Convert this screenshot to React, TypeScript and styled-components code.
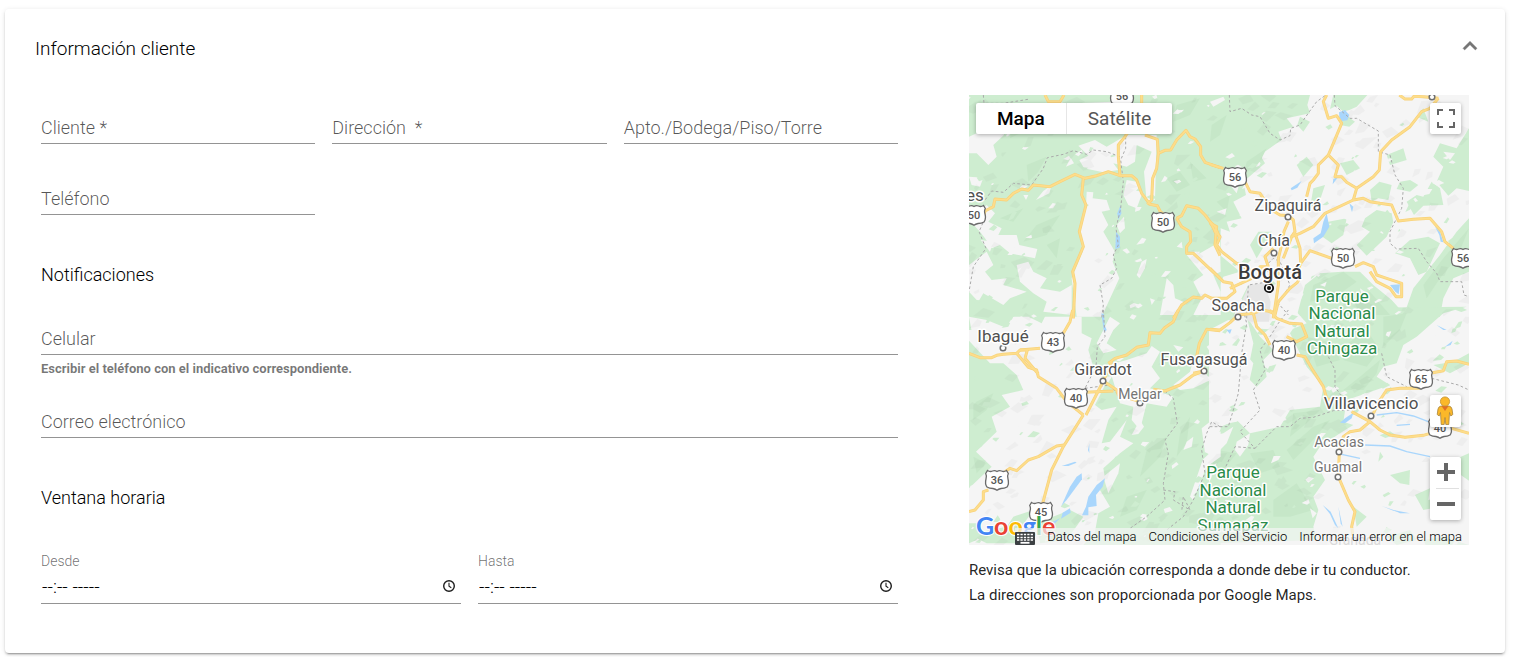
import React, { useId, useState } from 'react';
import styled, { createGlobalStyle } from 'styled-components';

const GlobalStyle = createGlobalStyle`
  *, *::before, *::after { box-sizing: border-box; }
  body {
    margin: 0;
    background: #fff;
    color: rgba(0, 0, 0, 0.87);
    font-family: Roboto, "Liberation Sans", sans-serif;
    font-size: 18px;
    font-weight: 300;
  }
  button, input { font: inherit; color: inherit; }
  button { margin: 0; padding: 0; border: 0; background: none; cursor: pointer; }
`;

const Card = styled.section`
  margin: 9px 15px 4px 5px;
  padding-bottom: 45px;
  border-radius: 4px;
  background: #fff;
  box-shadow: 0 3px 1px -2px rgba(0, 0, 0, 0.2), 0 2px 2px 0 rgba(0, 0, 0, 0.14),
    0 1px 5px 0 rgba(0, 0, 0, 0.12);
`;

const Header = styled.header`
  display: flex;
  align-items: center;
  justify-content: space-between;
  height: 86px;
  padding: 0 21px 6px 30px;
`;

const Title = styled.h2`
  margin: 0;
  color: #000;
  font-size: 19px;
  line-height: 24px;
  font-weight: 300;
`;

const ToggleButton = styled.button`
  display: flex;
  margin-bottom: 6px;
  color: #757575;
`;

const Body = styled.div`
  display: flex;
  align-items: flex-start;
  gap: 71px;
  padding: 0 36px;
`;

const Form = styled.form`
  display: flex;
  flex: 1;
  flex-direction: column;
  min-width: 0;
  padding-top: 17px;
`;

const Row = styled.div<{ $columns: number; $space?: number }>`
  display: grid;
  grid-template-columns: repeat(${(p) => p.$columns}, minmax(0, 1fr));
  gap: 17px;
  margin-bottom: ${(p) => p.$space ?? 0}px;
`;

const SectionTitle = styled.h3<{ $space: number }>`
  margin: 0 0 ${(p) => p.$space}px;
  color: #000;
  font-size: 18px;
  line-height: 24px;
  font-weight: 300;
`;

const FieldBox = styled.div`
  display: grid;
`;

const FieldLabel = styled.label`
  grid-area: 1 / 1;
  align-self: center;
  color: rgba(0, 0, 0, 0.66);
  line-height: 24px;
  white-space: pre;
  pointer-events: none;
`;

const FieldInput = styled.input`
  grid-area: 1 / 1;
  width: 100%;
  height: 32px;
  padding: 0;
  border: 0;
  border-bottom: 1px solid #949494;
  border-radius: 0;
  background: transparent;
  outline: none;
`;

const Hint = styled.p`
  margin: 6px 0 0;
  color: rgba(0, 0, 0, 0.54);
  font-size: 13px;
  line-height: 16px;
  font-weight: 700;
`;

const TimeBox = styled.div`
  display: flex;
  flex-direction: column;
  gap: 2px;
`;

const TimeLabel = styled.label`
  color: rgba(0, 0, 0, 0.58);
  font-size: 14px;
  line-height: 16px;
`;

const TimeControl = styled.div`
  display: flex;
  align-items: center;
  height: 33px;
  padding: 0 5px 2px 1px;
  border-bottom: 1px solid #949494;
`;

const TimeInput = styled.input`
  flex: 1;
  min-width: 0;
  padding: 0;
  border: 0;
  background: transparent;
  color: #000;
  outline: none;
  font-size: 19px;
`;

const PickerButton = styled.button`
  display: flex;
`;

const MapColumn = styled.aside`
  flex: 0 0 500px;
`;

const MapFrame = styled.div`
  position: relative;
  height: 450px;
  overflow: hidden;
  background: #f5f5f5;
`;

const MapCanvas = styled.svg`
  display: block;
  width: 100%;
  height: 100%;
`;

const ControlPanel = styled.div`
  position: absolute;
  display: flex;
  border-radius: 2px;
  background: #fff;
  box-shadow: 0 1px 4px rgba(0, 0, 0, 0.3);
`;

const TypePanel = styled(ControlPanel)`
  top: 8px;
  left: 7px;
`;

const TypeButton = styled.button<{ $active?: boolean }>`
  height: 31px;
  padding: 0 21px;
  color: ${(p) => (p.$active ? '#000' : '#565656')};
  font-size: 19px;
  font-weight: ${(p) => (p.$active ? 500 : 400)};
  & + & { border-left: 1px solid #e6e6e6; }
`;

const FullscreenPanel = styled(ControlPanel)`
  top: 8px;
  right: 8px;
`;

const ZoomPanel = styled(ControlPanel)`
  right: 8px;
  bottom: 25px;
  flex-direction: column;
`;

const PegmanPanel = styled(ControlPanel)`
  right: 8px;
  bottom: 118px;
`;

const SquareButton = styled.button<{ $tall?: boolean }>`
  display: flex;
  align-items: center;
  justify-content: center;
  width: 31px;
  height: ${(p) => (p.$tall ? 32 : 31)}px;
`;

const Divider = styled.div`
  height: 1px;
  margin: 0 2px 0 6px;
  background: #e0e0e0;
`;

const Attribution = styled.div`
  position: absolute;
  right: 0;
  bottom: 0;
  display: flex;
  align-items: center;
  gap: 12px;
  height: 17px;
  padding-right: 7px;
  background: rgba(245, 245, 245, 0.7);
  font-size: 13px;
  font-weight: 300;
`;

const AttributionLink = styled.a`
  color: #000;
  text-decoration: none;
`;

const KeyboardButton = styled.button`
  display: flex;
  align-self: flex-end;
`;

const MapNote = styled.p`
  margin: 13px 0 0;
  font-size: 15px;
  line-height: 25px;
  font-weight: 400;
`;

const ROADS: Record<string, string[]> = {
  a: [
    '70,400 75,378 100,365 105,342 140,345 160,325 185,312 205,316 220,300 270,305 300,290 345,268 375,280 410,272 445,260 480,272 515,272 530,285 545,325 570,358 592,362 600,378 612,390',
    '370,280 365,330 378,360 358,440 370,485 338,560 345,595 340,700',
    '545,30 545,80 495,155 475,180 475,215 480,272',
    '555,150 592,163 595,205 590,250 578,280 575,345 562,358',
    '595,205 615,196 632,195 650,165 678,136 690,155 705,162 722,185 722,210 735,232 780,248',
    '650,400 665,392 680,362 715,370 735,390 750,410 765,425 780,460',
    '650,400 665,425 690,440 692,470 680,485 680,505 700,505 780,580',
    '750,410 768,445 765,480 780,512',
    '640,700 665,660 700,636 725,640 735,630 755,640',
    '255,30 265,50 300,50 312,30',
  ],
  b: [
    '0,238 40,250',
    '105,290 120,320 150,325 160,340 185,375 210,390 235,392 250,405 255,440 245,455',
    '350,30 340,50 355,100 380,92 395,115 370,175 355,210 325,240 325,265 310,285 300,295 290,335',
    '355,210 385,240 375,275 395,275 410,292 440,310',
    '685,40 660,70 635,80 600,125 545,165 512,200 508,255 490,275 440,310 430,345',
    '430,345 345,385 310,425 270,445 245,455 220,520',
    '430,345 460,340 480,350 510,355 545,360 565,408 610,403 660,400 695,440 705,470 730,490',
    '568,30 585,42 605,42 612,34 640,35 685,40',
    '235,410 222,440 215,480 205,520 205,600 190,700',
    '255,445 270,490 272,535 300,497 365,520',
    '435,545 460,533 490,545 500,570 530,580 575,595 575,635 558,635 540,610 500,590 480,560',
    '190,490 165,515 175,545 150,545 178,605',
    '0,415 20,425 15,440 30,455 20,480 35,500 80,535 130,560',
    '0,550 40,590 65,595 75,620 50,640 0,640',
    '60,610 125,580',
    '265,590 240,610 205,650 195,690',
    '272,535 262,560 265,590',
  ],
  c: [
    '27,130 60,143 95,143 110,136 130,133 170,130 180,120 240,115',
    '310,70 330,35 338,0',
    '170,130 205,172 230,180 235,200 290,235 320,275 370,315',
    '180,120 202,120 195,145 235,192',
    '375,247 460,243',
    '455,155 430,213 378,315',
    '430,213 470,240 475,255 540,275',
    '370,315 310,410 275,480 248,580',
    '312,405 290,408 235,440 205,450 170,482 150,475 135,485',
    '85,540 70,545 70,570 45,600 27,605',
    '445,160 465,145 500,135 530,112 565,105 570,68 600,70 612,55 640,35 655,0',
    '580,238 615,243 660,225 700,195 735,182 700,190',
    '710,140 718,100 740,58 780,62',
  ],
  d: [
    '0,58 30,60 60,38 85,15 130,10 140,50 165,75 180,105',
    '130,10 155,0 185,5 200,25 240,40 275,42 290,80 260,95 230,80',
    '180,10 185,0',
    '260,135 285,140 305,175 340,230 350,265 370,275',
    '425,305 480,335 510,360 540,375 585,382 640,376 660,370',
    '725,355 777,370',
    '480,335 450,360 420,365 400,380 388,425 385,500 415,570 435,605 425,650 430,690',
    '490,310 510,270 530,240 570,235 630,235',
    '660,190 700,182 710,155 740,153 777,163',
  ],
};

const BORDERS: Record<string, string[]> = {
  a: [
    '70,30 72,55 130,55 210,42',
    '480,215 440,200 400,195 380,208 340,197 310,208 262,218 250,250 215,300 160,295 130,322 95,318 75,345',
    '497,155 497,190 482,225 490,290 482,370 468,430 475,480 460,510 470,550 455,580 420,600 430,660 425,700',
    '75,400 57,440 78,490 40,545 27,620',
  ],
  b: [
    '58,30 60,80 95,70 125,90 150,95 180,145 210,165 240,152 242,130 270,120 298,80 320,50 345,32',
    '373,30 375,62 420,100 440,100 505,138 505,200 540,210 555,270 580,310 575,370 560,400 540,440 540,475 560,492 625,490 650,530 680,565 690,590 755,590 762,630 777,635',
    '110,700 115,600 180,590 170,540 190,520 210,530 240,600 205,655 235,690',
  ],
  c: [
    '430,0 435,80 412,110 408,170 375,235',
    '375,235 450,225 470,250',
    '615,243 640,265 652,340 615,390 625,430 610,520 615,570 560,620 510,655',
    '780,350 755,335 740,370 725,420 735,490 700,570 670,620 620,660',
    '610,540 645,545 640,570 690,600 670,560 665,605',
  ],
  d: [
    '100,0 110,40 95,130 85,250 55,350 0,350',
    '235,0 205,40 180,80 150,120 165,180 130,240 150,300 90,365 135,415 75,410 45,475',
    '135,415 200,350 240,350 270,325 310,322 370,302 425,300',
    '355,140 375,180 375,230 395,260',
    '515,130 530,200 590,230',
    '665,205 745,225 777,240',
  ],
};

const WATER: Record<string, string[]> = {
  a: ['482,360 484,385 475,405 472,385', '468,440 480,455 479,488 466,492'],
  b: [
    '387,82 405,75 418,90 412,106 395,108 388,98',
    '350,385 358,425 340,455 312,475 310,460 332,445 340,410',
    '242,310 275,288 262,308 245,316',
    '385,275 368,298 370,282',
    '418,355 430,365 426,382',
    '675,425 690,440 700,472 692,470 688,450',
    '540,600 570,598 566,628 556,620',
  ],
  c: [
    '424,10 432,12 434,45 440,60 432,68',
    '388,400 388,430 384,420',
    '305,468 345,455 350,458 325,468',
    '365,490 366,508 320,570 304,588 330,530 350,500',
    '435,505 428,530 408,555 410,588 385,592 385,616 366,616 378,590 385,560 410,525',
    '330,595 332,608 303,626 308,608',
    '270,640 300,625 285,640',
  ],
  d: [
    '680,45 710,60 700,60',
    '705,110 728,92 722,105',
    '390,338 405,325 430,308 425,325 405,340',
    '50,60 65,58 60,72',
    '338,585 362,605 385,655 375,645 360,612',
    '385,590 398,650 392,640',
    '515,588 575,608 550,602',
    '550,600 600,610 570,610',
  ],
};

const RIVERS: Record<string, string[]> = {
  a: [],
  b: [],
  c: [],
  d: [
    '500,315 560,308 610,318 655,335',
    '465,405 540,408 590,425 660,440',
    '395,433 450,445',
    '560,346 600,343',
  ],
};

const FOREST: Record<string, string[]> = {
  a: ['27,30 782,30 782,695 27,695'],
  b: [
    '-3,30 300,30 292,60 300,85 230,100 250,125 205,140 215,165 150,210 165,235 100,290 108,330 70,350 95,400 50,410 60,440 20,425 30,480 -3,480',
    '370,30 472,30 440,65 418,75 400,80 380,62 360,72',
    '400,85 435,110 418,125 390,120',
    '270,95 300,110 280,140 262,120',
    '690,175 740,190 777,130 777,318 740,310 715,332 680,290 700,245 670,215',
    '620,330 640,335 665,290 690,310 700,360 640,362 612,390 590,350',
    '570,290 600,285 625,300 600,320 560,312',
    '480,315 508,290 545,300 535,345 505,340 485,350',
    '465,400 500,375 545,385 550,412 530,455 470,512 440,480 480,440 455,425',
    '355,410 410,400 400,450 365,475 330,450',
    '530,210 580,190 590,225 540,240',
    '285,600 330,565 395,560 450,560 490,600 545,645 590,695 260,695',
    '580,695 610,610 690,510 740,440 777,400 777,560 730,580 700,640 690,695',
    '555,505 600,465 655,455 690,475 650,560 625,570 600,520',
    '120,480 145,440 185,440 170,470 140,520',
    '260,240 290,215 310,240 280,275',
    '-3,520 30,510 90,560 40,575 30,600 -3,560',
    '95,640 115,600 140,660 110,695',
    '390,235 430,225 450,250 410,270',
    '310,310 345,300 330,345 300,370',
    '620,95 640,70 655,110',
  ],
  c: [
    '27,0 200,0 160,20 145,50 90,60 27,60',
    '27,92 90,160 130,160 170,195 190,240 125,255 150,290 95,320 110,365 48,425 95,470 27,535',
    '365,0 782,0 782,705 370,705 405,665 415,610 450,590 420,540 435,505 430,475 480,430 520,400 480,380 500,330 450,395 425,400 445,330 470,290 425,300 405,285 440,215 400,170 385,120 395,85 365,70',
    '140,650 160,620 220,600 185,650 200,700 80,700 30,675 90,660',
    '27,640 60,640 50,690 27,700',
    '230,640 330,600 370,620 320,690 240,700',
    '205,20 260,10 245,40',
  ],
  d: [
    '-3,-10 80,-10 60,60 20,110 -3,90',
    '240,70 290,-5 770,-10 700,10 620,80 580,105 560,160 520,170 500,200 540,225 470,250 410,270 400,335 430,345 390,370 330,410 310,440 345,510 310,560 325,600 310,650 320,690 -3,700 -3,365 80,330 120,370 210,350 240,300 330,290 340,230 290,170',
    '110,20 150,80 190,120 160,150 170,200 140,230 110,200 130,100',
    '670,165 730,155 777,130 777,160 720,190',
    '540,495 600,480 598,525 570,520',
    '725,452 777,430 777,512 745,490',
    '510,425 520,440 505,455',
    '615,555 660,535 655,570 690,560 690,590 640,600',
    '430,590 470,620 440,650',
    '530,680 600,660 620,690 560,705',
    '640,690 700,680 777,705 650,712',
  ],
};

const CLEARINGS: Record<string, string[]> = {
  a: [
    '27,155 125,110 132,150 100,180 110,215 85,240 50,205 27,205',
    '27,275 70,278 60,305 35,300',
    '215,60 460,50 450,85 420,60 370,75 300,50',
    '355,182 405,165 440,185 500,150 590,150 585,345 560,350 552,260 575,200 530,180 525,230 500,245 460,235 475,255 430,262 372,250 358,225 385,212',
    '318,245 332,218 342,235',
    '228,345 250,318 275,300 268,325',
    '190,330 205,330 198,345',
    '505,360 490,330 500,285 530,290 545,330 530,370',
    '380,320 400,322 398,340 440,345 450,375 425,380 445,420 430,440 465,500 458,530 478,580 425,695 350,695 335,580 368,500 358,430 378,365',
    '27,405 80,360 105,385 85,410 125,430 115,450 170,450 178,480 232,492 225,520 150,505 120,480 95,490 75,460 60,440',
    '27,540 80,500 100,540 75,560 95,585 140,580 130,600 200,620 150,640 130,660 70,625 55,650 27,620',
    '170,540 205,530 220,560 260,580 240,610 300,620 335,600 335,690 250,680 260,650 220,625 180,590',
    '62,465 100,470 90,500',
    '530,570 545,530 560,522 555,550 538,580',
    '680,510 720,505 780,470 782,560 760,570 782,620 782,690 700,690 725,640 700,590 730,570',
    '620,580 640,600 645,640 670,650 650,690 600,690',
    '700,530 690,500 720,500',
    '470,420 492,395 495,430 480,445',
    '650,485 665,470 668,490',
    '570,640 585,645 575,660',
  ],
  b: [
    '0,50 40,35 45,45 10,65',
    '60,300 90,290 80,325',
    '20,380 50,370 45,390',
    '330,600 350,590 345,605',
    '700,200 735,205 720,225',
    '450,610 470,625 455,630',
  ],
  c: [
    '27,20 80,30 130,50 100,70 160,80 40,90',
    '445,165 500,150 560,130 575,108 600,125 575,170 600,205 570,235 640,260 620,290 560,280 540,360 515,330 520,290 480,280 465,230',
    '640,105 670,112 655,125',
    '640,225 690,185 700,150 745,200 782,165 782,200 740,215 700,235 660,240',
    '450,20 480,40 460,60 440,100 470,120 430,130 410,100',
    '515,375 540,330 552,350 535,372',
    '680,395 700,380 695,410 670,420',
    '725,355 782,310 782,440 740,470 700,570 690,560 735,430',
    '430,500 480,460 475,490 445,550',
    '740,110 782,80 782,110 760,140',
  ],
  d: [
    '-3,60 55,30 110,40 90,110 130,160 110,250 130,300 80,335 -3,350',
    '-3,380 40,370 70,350 50,400 10,440 -3,450',
    '80,395 120,370 115,405 90,440 75,420',
    '150,270 210,300 230,330 170,345',
    '-3,470 20,460 5,500 -3,520',
    '250,-5 290,40 240,60 210,30',
    '300,595 320,610 308,625',
  ],
};

const RELIEF: Record<string, string[]> = {
  a: [
    '160,95 215,110 190,140 150,160',
    '200,240 260,215 235,260 205,290',
    '230,420 300,390 260,450 190,470',
    '120,400 190,370 160,410',
    '650,60 720,40 690,90 640,110',
    '690,230 740,280 700,290',
    '620,280 660,260 690,300 650,320',
    '260,480 300,460 290,520',
  ],
  b: [
    '5,120 50,90 30,150 0,170',
    '110,230 170,190 150,230 100,270',
    '310,600 400,560 440,590 370,640 300,650',
    '420,620 480,620 540,690 450,690',
    '640,600 700,520 777,430 740,520 690,580 650,640',
    '20,350 60,330 50,380',
  ],
  c: [
    '40,280 100,250 80,300 40,330',
    '560,420 620,380 600,440 540,500',
    '660,370 690,320 680,400 650,440',
    '500,560 560,540 530,600 480,620',
    '40,440 80,460 50,490',
  ],
  d: [
    '400,110 470,60 510,120 470,170 400,150',
    '450,200 510,150 500,190 460,240 400,240',
    '520,20 590,10 570,60 520,110',
    '290,80 370,100 390,150 320,170',
    '230,420 310,350 360,330 300,400 250,450',
    '120,430 190,420 210,470 150,490',
    '190,570 260,520 310,600 240,620 190,620',
    '20,420 80,430 40,480 0,490',
    '250,310 330,300 290,340 240,380',
  ],
};

const TILES = [
  { id: 'a', x: -27, y: -30 },
  { id: 'b', x: 723, y: -30 },
  { id: 'c', x: -27, y: 645 },
  { id: 'd', x: 723, y: 645 },
];

/* Small angular facets that give the land its hill-shaded texture. */
function facets(count: number, seed: number, size: number): string[] {
  let state = seed;
  const next = () => {
    state = (state * 16807) % 2147483647;
    return state / 2147483647;
  };
  return Array.from({ length: count }, () => {
    const cx = next() * 1500;
    const cy = next() * 1350;
    const r = size * (0.4 + next());
    const tilt = -0.9 + next() * 0.8;
    const corner = (angle: number, stretch: number) => {
      const dx = Math.cos(angle) * r * stretch;
      const dy = Math.sin(angle) * r * 0.5;
      const x = cx + dx * Math.cos(tilt) - dy * Math.sin(tilt);
      const y = cy + dx * Math.sin(tilt) + dy * Math.cos(tilt);
      return `${Math.round(x)},${Math.round(y)}`;
    };
    return [0, 1.4, 3, 4.5].map((a) => corner(a + next() * 0.9, 0.6 + next() * 0.7)).join(' ');
  });
}

const SHADE_FACETS = facets(420, 71, 24);
const CLEAR_FACETS = facets(190, 912, 13);
const GREEN_FACETS = facets(190, 4407, 14);

const points = (list: string[]) => list.map((p) => <polygon key={p} points={p} />);
const lines = (list: string[]) => list.map((p) => <polyline key={p} points={p} />);

function Terrain() {
  const layer = (data: Record<string, string[]>, draw: (l: string[]) => React.ReactNode) =>
    TILES.map((t) => (
      <g key={t.id} transform={`translate(${t.x} ${t.y})`}>
        {draw(data[t.id])}
      </g>
    ));
  return (
    <g transform="scale(0.33333)" strokeLinejoin="round">
      <g fill="#ceedd0">{layer(FOREST, points)}</g>
      <g fill="#c6e7c8">{layer(RELIEF, points)}</g>
      <g fill="#f5f5f5">{layer(CLEARINGS, points)}</g>
      <g fill="#f5f5f5">{points(CLEAR_FACETS)}</g>
      <g fill="#ceedd0">{points(GREEN_FACETS)}</g>
      <g fill="#000" opacity="0.025">{points(SHADE_FACETS)}</g>
      <polygon points="840,570 885,565 905,620 900,680 840,680 810,640" fill="#e6e6e6" />
      <g fill="#a9d6fc">{layer(WATER, points)}</g>
      <g fill="none" stroke="#a9d6fc" strokeWidth="4">{layer(RIVERS, lines)}</g>
      <g fill="none" stroke="#aaaaaa" strokeWidth="3" strokeDasharray="8 7">
        {layer(BORDERS, lines)}
      </g>
      <g fill="none" stroke="#f8d27a" strokeWidth="9">{layer(ROADS, lines)}</g>
      <g fill="none" stroke="#fddd8b" strokeWidth="5">{layer(ROADS, lines)}</g>
    </g>
  );
}

const SHIELDS: [number, number, string][] = [
  [153, 1, '56'], [266, 82, '56'], [194, 127, '50'], [374, 163, '50'], [494, 163, '56'],
  [5, 120, '50'], [84, 247, '43'], [315, 255, '40'], [107, 303, '40'], [452, 284, '65'],
  [471, 333, '40'], [28, 385, '36'], [72, 417, '45'],
];

const Shield = ({ x, y, label }: { x: number; y: number; label: string }) => (
  <g transform={`translate(${x} ${y})`}>
    <path
      d="M-9.500 -9.500 Q-7 -7.800 -4.500 -9 Q-2 -9.800 0 -8.500 Q2 -9.800 4.500 -9 Q7 -7.800 9.500 -9.500 L11.300 -6.500 Q10 -4 11 -1 Q12.300 4 10 7 Q7.500 8.500 4 8.500 Q1.500 9 0 10.200 Q-1.500 9 -4 8.500 Q-7.500 8.500 -10 7 Q-12.300 4 -11 -1 Q-10 -4 -11.300 -6.500 Z"
      fill="#fff"
      stroke="#6b6b6b"
      strokeWidth="1.300"
    />
    <text y="4" fontSize="11" fontWeight="500" fill="#555" textAnchor="middle">{label}</text>
  </g>
);

type Place = { x: number; y: number; text: string; size: number; fill?: string; weight?: number };

const PLACES: Place[] = [
  { x: 319, y: 116, text: 'Zipaquirá', size: 16 },
  { x: 305, y: 151, text: 'Chía', size: 16 },
  { x: 301, y: 184, text: 'Bogotá', size: 20, weight: 500, fill: '#3c3c3c' },
  { x: 269, y: 216, text: 'Soacha', size: 16 },
  { x: 34, y: 247, text: 'Ibagué', size: 17 },
  { x: 134, y: 280, text: 'Girardot', size: 16 },
  { x: 171, y: 304, text: 'Melgar', size: 14, fill: '#757575' },
  { x: 235, y: 270, text: 'Fusagasugá', size: 16 },
  { x: 402, y: 314, text: 'Villavicencio', size: 17 },
  { x: 370, y: 352, text: 'Acacías', size: 14, fill: '#757575' },
  { x: 369, y: 377, text: 'Guamal', size: 14, fill: '#757575' },
  { x: 6, y: 106, text: 'es', size: 17 },
  { x: 386, y: 450, text: 'Granada', size: 14, fill: '#999' },
];

const PARKS: Place[] = [
  { x: 373, y: 207, text: 'Parque', size: 17 },
  { x: 373, y: 224, text: 'Nacional', size: 17 },
  { x: 373, y: 242, text: 'Natural', size: 17 },
  { x: 373, y: 259, text: 'Chingaza', size: 17 },
  { x: 264, y: 383, text: 'Parque', size: 17 },
  { x: 264, y: 401, text: 'Nacional', size: 17 },
  { x: 264, y: 418, text: 'Natural', size: 17 },
  { x: 264, y: 436, text: 'Sumapaz', size: 17 },
];

const TOWNS: [number, number][] = [
  [319, 122], [305, 158], [269, 222], [34, 253], [134, 286], [171, 308], [235, 276],
  [402, 321], [370, 357], [369, 382], [463, 2],
];

const PlaceLabel = ({ x, y, text, size, fill = '#505050', weight = 400 }: Place) => (
  <text x={x} y={y} fontSize={size} fill={fill} fontWeight={weight}>{text}</text>
);

function MapDrawing() {
  return (
    <MapCanvas
      viewBox="0 0 500 450"
      preserveAspectRatio="xMidYMid slice"
      role="img"
      aria-label="Mapa de Bogotá y alrededores"
    >
      <Terrain />
      {SHIELDS.map(([x, y, label]) => <Shield key={`${x}-${y}`} x={x} y={y} label={label} />)}
      <g fill="#fff" stroke="#707070" strokeWidth="1.500">
        {TOWNS.map(([x, y]) => <circle key={`${x}-${y}`} cx={x} cy={y} r="2.800" />)}
      </g>
      <circle cx="300" cy="193" r="4.200" fill="#fff" stroke="#111" strokeWidth="1.800" />
      <circle cx="300" cy="193" r="2" fill="#111" />
      <g textAnchor="middle" stroke="#fff" strokeWidth="3" strokeLinejoin="round" paintOrder="stroke">
        {PLACES.map((p) => <PlaceLabel key={p.text} {...p} />)}
        {PARKS.map((p) => (
          <PlaceLabel key={`${p.x}-${p.y}`} {...p} fill="#2a8c4a" />
        ))}
      </g>
      <text x="7" y="440" fontFamily="Lato" fontSize="25" fontWeight="700"
        stroke="#fff" strokeWidth="2" paintOrder="stroke">
        <tspan fill="#4285f4">G</tspan><tspan fill="#ea4335">o</tspan>
        <tspan fill="#fbbc05">o</tspan><tspan fill="#4285f4">g</tspan>
        <tspan fill="#34a853">l</tspan><tspan fill="#ea4335">e</tspan>
      </text>
    </MapCanvas>
  );
}

const ClockIcon = () => (
  <svg width="14" height="14" viewBox="0 0 14 14" fill="none" stroke="#1c1c1c">
    <circle cx="7" cy="7" r="5.300" strokeWidth="1.400" />
    <path d="M7 3.800V7.300L9.300 8.700" strokeWidth="1.100" />
  </svg>
);

const PegmanIcon = () => (
  <svg width="19" height="30" viewBox="0 0 19 30">
    <path d="M5 10Q2.500 10.500 2 13L1.200 18.500L3.200 20L4.500 16.500L5.200 28.500H8.200L9 21.500L9.800 28.500H12.800L13.500 16.500L14.800 20L16.800 18.500L16 13Q15.500 10.500 13 10Z" fill="#fbb829" stroke="#a8843a" strokeWidth=".8" />
    <path d="M5.500 10H12.500L9 15Z" fill="#e06f26" />
    <circle cx="9" cy="5.500" r="4.600" fill="#fbb829" stroke="#c08f30" strokeWidth=".8" />
  </svg>
);

const KeyboardIcon = () => (
  <svg width="20" height="13" viewBox="0 0 20 13">
    <rect width="20" height="13" rx="1" fill="#3c4043" />
    <path d="M2 2.500H18M2 5.500H18M2 8H18" stroke="#fff" strokeWidth="1.700" strokeDasharray="2.300 1.120" />
    <path d="M5.500 10.800H14.500" stroke="#fff" strokeWidth="1.800" />
  </svg>
);

function Field({ label, type = 'text', required, hint }: {
  label: string; type?: string; required?: boolean; hint?: string;
}) {
  const id = useId();
  const [value, setValue] = useState('');
  return (
    <div>
      <FieldBox>
        {value === '' ? <FieldLabel htmlFor={id}>{label}</FieldLabel> : null}
        <FieldInput
          id={id}
          type={type}
          required={required}
          value={value}
          onChange={(e) => setValue(e.target.value)}
        />
      </FieldBox>
      {hint ? <Hint>{hint}</Hint> : null}
    </div>
  );
}

function TimeField({ label }: { label: string }) {
  const id = useId();
  return (
    <TimeBox>
      <TimeLabel htmlFor={id}>{label}</TimeLabel>
      <TimeControl>
        <TimeInput id={id} type="text" defaultValue="--:-- -----" />
        <PickerButton type="button" aria-label={`Elegir hora: ${label}`}>
          <ClockIcon />
        </PickerButton>
      </TimeControl>
    </TimeBox>
  );
}

function MapView() {
  return (
    <MapFrame>
      <MapDrawing />
      <Attribution>
        <KeyboardButton type="button" aria-label="Combinaciones de teclas"><KeyboardIcon /></KeyboardButton>
        <AttributionLink href="#datos">Datos del mapa</AttributionLink>
        <AttributionLink href="#condiciones">Condiciones del Servicio</AttributionLink>
        <AttributionLink href="#error">Informar un error en el mapa</AttributionLink>
      </Attribution>
      <TypePanel>
        <TypeButton type="button" $active>Mapa</TypeButton>
        <TypeButton type="button">Satélite</TypeButton>
      </TypePanel>
      <FullscreenPanel>
        <SquareButton type="button" aria-label="Pantalla completa">
          <svg width="19" height="19" viewBox="0 0 19 19" fill="none" stroke="#666" strokeWidth="2">
            <path d="M2 6V1H7M13 1H18V6M18 13V18H13M7 18H2V13" />
          </svg>
        </SquareButton>
      </FullscreenPanel>
      <PegmanPanel>
        <SquareButton type="button" $tall aria-label="Street View"><PegmanIcon /></SquareButton>
      </PegmanPanel>
      <ZoomPanel>
        <SquareButton type="button" aria-label="Acercar">
          <svg width="19" height="19" viewBox="0 0 19 19" stroke="#666" strokeWidth="4">
            <path d="M1 9H19M10 0V18" />
          </svg>
        </SquareButton>
        <Divider />
        <SquareButton type="button" aria-label="Alejar">
          <svg width="19" height="19" viewBox="0 0 19 19" stroke="#666" strokeWidth="4">
            <path d="M1 9H19" />
          </svg>
        </SquareButton>
      </ZoomPanel>
    </MapFrame>
  );
}

export default function App() {
  return (
    <>
      <GlobalStyle />
      <Card>
        <Header>
          <Title>Información cliente</Title>
          <ToggleButton type="button" aria-label="Contraer">
            <svg width="28" height="28" viewBox="0 0 24 24" fill="currentColor" stroke="currentColor" strokeWidth=".4">
              <path d="M12 8l-6 6 1.410 1.410L12 10.830l4.590 4.580L18 14z" />
            </svg>
          </ToggleButton>
        </Header>
        <Body>
          <Form>
            <Row $columns={3} $space={39}>
              <Field label="Cliente *" required />
              <Field label="Dirección  *" required />
              <Field label="Apto./Bodega/Piso/Torre" />
            </Row>
            <Row $columns={3} $space={48}>
              <Field label="Teléfono" type="tel" />
            </Row>
            <SectionTitle $space={36}>Notificaciones</SectionTitle>
            <Row $columns={1} $space={29}>
              <Field label="Celular" type="tel" hint="Escribir el teléfono con el indicativo correspondiente." />
            </Row>
            <Row $columns={1} $space={48}>
              <Field label="Correo electrónico" type="email" />
            </Row>
            <SectionTitle $space={43}>Ventana horaria</SectionTitle>
            <Row $columns={2}>
              <TimeField label="Desde" />
              <TimeField label="Hasta" />
            </Row>
          </Form>
          <MapColumn>
            <MapView />
            <MapNote>
              Revisa que la ubicación corresponda a donde debe ir tu conductor.
              <br />
              La direcciones son proporcionada por Google Maps.
            </MapNote>
          </MapColumn>
        </Body>
      </Card>
    </>
  );
}
